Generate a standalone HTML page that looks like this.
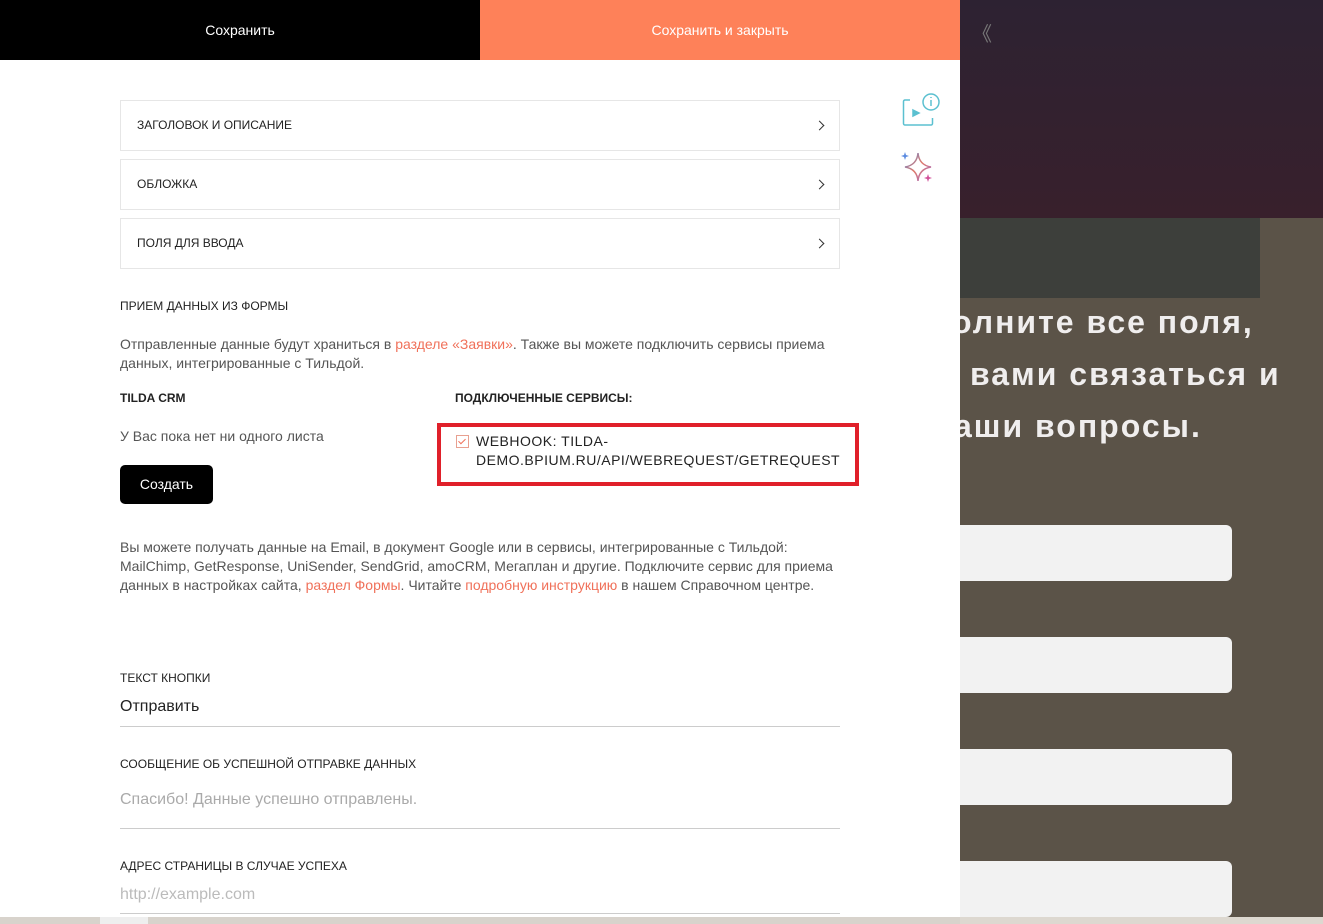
<!DOCTYPE html>
<html><head><meta charset="utf-8"><style>
*{margin:0;padding:0;box-sizing:border-box}
body{width:1323px;height:924px;overflow:hidden;position:relative;font-family:"Liberation Sans",sans-serif;background:#fff}
.bg{position:absolute;left:960px;top:0;width:363px;height:924px;background:#5b5348}
.bgtop{position:absolute;left:960px;top:0;width:363px;height:218px;background:linear-gradient(180deg,#2d2232,#38202c)}
.kb{position:absolute;left:960px;top:218px;width:300px;height:80px;background:#3d3f3b}
.htxt{position:absolute;left:960px;top:296px;width:363px;overflow:hidden;color:#f0eeee;font-weight:bold;font-size:32px;line-height:52px;letter-spacing:2px;white-space:nowrap}
.inp{position:absolute;left:960px;width:272px;height:56px;background:#f2f2f2;border-radius:0 6px 6px 0}
.panel{position:absolute;left:0;top:0;width:960px;height:924px;background:#fff}
.b1{position:absolute;left:0;top:0;width:480px;height:60px;background:#000;color:#fff;font-size:14px;text-align:center;line-height:60px}
.b2{position:absolute;left:480px;top:0;width:480px;height:60px;background:#fe8159;color:#fff;font-size:14px;text-align:center;line-height:60px}
.acc{position:absolute;left:120px;width:720px;height:51px;border:1px solid #e6e6e6;font-size:12px;color:#222;line-height:49px;padding-left:16px}
.acc:after{content:"";position:absolute;right:16px;top:21px;width:6px;height:6px;border-right:1px solid #333;border-top:1px solid #333;transform:rotate(45deg)}
.t{position:absolute;font-size:12px;color:#222}
.p{position:absolute;font-size:14px;color:#555;line-height:19px}
.o{color:#f0715a}
.line{position:absolute;left:120px;width:720px;height:1px;background:#ccc}
</style></head><body>
<div class="bg"></div><div class="bgtop"></div><div class="kb"></div>
<div style="position:absolute;left:972px;top:18px;color:#777;font-size:20px">《</div>
<div class="htxt"><div style="margin-left:-8px">олните все поля,</div><div style="margin-left:10px">вами связаться и</div><div style="margin-left:-6px">аши вопросы.</div></div>
<div class="inp" style="top:525px"></div><div class="inp" style="top:637px"></div><div class="inp" style="top:749px"></div><div class="inp" style="top:861px"></div>
<div style="position:absolute;left:0;top:917px;width:1323px;height:7px;background:#ddd8d0"></div>
<div class="panel"></div>
<div style="position:absolute;left:0;top:917px;width:960px;height:7px;background:#d8d3cc"></div>
<div style="position:absolute;left:100px;top:917px;width:48px;height:7px;background:#eee"></div>
<div class="b1">Сохранить</div><div class="b2">Сохранить и закрыть</div>
<svg style="position:absolute;left:900px;top:92px" width="42" height="36" viewBox="0 0 42 36" fill="none" stroke="#5bc0d0" stroke-width="1.5"><path d="M10 8H5a1.5 1.5 0 0 0-1.5 1.5v22a1.5 1.5 0 0 0 1.5 1.5h26a1.5 1.5 0 0 0 1.5-1.5V26"/><path d="M13 18l6 3-6 3z" fill="#5bc0d0"/><circle cx="31" cy="10" r="8"/><path d="M31 8v6M31 5v1"/></svg>
<svg style="position:absolute;left:900px;top:150px" width="36" height="36" viewBox="0 0 36 36"><defs><linearGradient id="g" x1="0" y1="0" x2="1" y2="1"><stop offset="0" stop-color="#5b8be0"/><stop offset=".5" stop-color="#e07a6a"/><stop offset="1" stop-color="#9b6ad8"/></linearGradient></defs><path d="M18 3Q19 15 31 17Q19 19 18 31Q17 19 5 17Q17 15 18 3z" fill="none" stroke="url(#g)" stroke-width="1.5"/><path d="M5 2l1 3 3 1-3 1-1 3-1-3-3-1 3-1z" fill="#5b8be0"/><path d="M28 24l1 3 3 1-3 1-1 3-1-3-3-1 3-1z" fill="#d2509a"/></svg>
<div class="acc" style="top:100px">ЗАГОЛОВОК И ОПИСАНИЕ</div>
<div class="acc" style="top:159px">ОБЛОЖКА</div>
<div class="acc" style="top:218px">ПОЛЯ ДЛЯ ВВОДА</div>
<div class="t" style="left:120px;top:299px">ПРИЕМ ДАННЫХ ИЗ ФОРМЫ</div>
<div class="p" style="left:120px;top:335px;width:720px">Отправленные данные будут храниться в <span class="o">разделе «Заявки»</span>. Также вы можете подключить сервисы приема данных, интегрированные с Тильдой.</div>
<div class="t" style="left:120px;top:391px;font-weight:bold">TILDA CRM</div>
<div class="t" style="left:455px;top:391px;font-weight:bold">ПОДКЛЮЧЕННЫЕ СЕРВИСЫ:</div>
<div class="p" style="left:120px;top:427px">У Вас пока нет ни одного листа</div>
<div style="position:absolute;left:120px;top:465px;width:93px;height:39px;background:#000;border-radius:5px;color:#fff;font-size:14px;text-align:center;line-height:39px">Создать</div>
<div style="position:absolute;left:437px;top:423px;width:422px;height:63px;border:4px solid #e0202a"></div>
<div style="position:absolute;left:456px;top:435px;width:13px;height:13px;border:1px solid #e8a090"></div>
<div style="position:absolute;left:460px;top:437px;width:4px;height:7px;border-right:1px solid #f0715a;border-bottom:1px solid #f0715a;transform:rotate(45deg)"></div>
<div class="p" style="left:476px;top:432px;color:#222;font-size:14px;letter-spacing:.5px">WEBHOOK: TILDA-<br>DEMO.BPIUM.RU/API/WEBREQUEST/GETREQUEST</div>
<div class="p" style="left:120px;top:538px;width:720px">Вы можете получать данные на Email, в документ Google или в сервисы, интегрированные с Тильдой: MailChimp, GetResponse, UniSender, SendGrid, amoCRM, Мегаплан и другие. Подключите сервис для приема данных в настройках сайта, <span class="o">раздел Формы</span>. Читайте <span class="o">подробную инструкцию</span> в нашем Справочном центре.</div>
<div class="t" style="left:120px;top:671px">ТЕКСТ КНОПКИ</div>
<div class="p" style="left:120px;top:697px;color:#222;font-size:16px">Отправить</div>
<div class="line" style="top:726px"></div>
<div class="t" style="left:120px;top:757px">СООБЩЕНИЕ ОБ УСПЕШНОЙ ОТПРАВКЕ ДАННЫХ</div>
<div class="p" style="left:120px;top:790px;color:#aaa;font-size:16px">Спасибо! Данные успешно отправлены.</div>
<div class="line" style="top:828px"></div>
<div class="t" style="left:120px;top:859px">АДРЕС СТРАНИЦЫ В СЛУЧАЕ УСПЕХА</div>
<div class="p" style="left:120px;top:885px;color:#bbb;font-size:16px">http://example.com</div>
<div class="line" style="top:913px"></div>
</body></html>
